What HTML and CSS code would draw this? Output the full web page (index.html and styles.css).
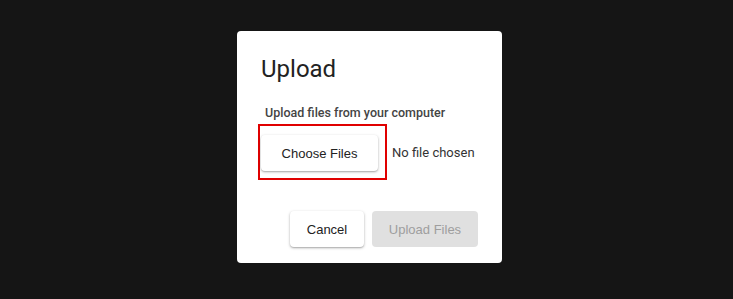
FILE: index.html
```html
<!DOCTYPE html>
<html>
<head>
<meta charset="utf-8">
<link rel="stylesheet" href="styles.css">
</head>
<body>
<div class="dialog">
  <h2 class="title">Upload</h2>
  <p class="subtitle">Upload files from your computer</p>
  <div class="file-row">
    <div class="highlight">
      <button class="btn btn-choose">Choose Files</button>
    </div>
    <span class="file-status">No file chosen</span>
  </div>
  <div class="actions">
    <button class="btn btn-cancel">Cancel</button>
    <button class="btn btn-disabled" disabled>Upload Files</button>
  </div>
</div>
</body>
</html>
```

FILE: styles.css
```css
html, body {
  margin: 0;
  padding: 0;
  height: 299px;
  background: #151515;
  overflow: hidden;
}
body {
  padding-top: 31px;
  box-sizing: border-box;
}
.dialog {
  margin-left: 237px;
  width: 265px;
  height: 232px;
  box-sizing: border-box;
  background: #ffffff;
  border-radius: 4px;
  padding: 22px 24px 16px 24px;
  display: flex;
  flex-direction: column;
  font-family: Roboto, "Liberation Sans", sans-serif;
}
.title {
  margin: 0;
  font-size: 24px;
  line-height: 32px;
  font-weight: 400;
  color: #222222;
}
.subtitle {
  margin: 20px 0 0 4px;
  font-size: 12.5px;
  line-height: 16px;
  font-weight: 500;
  color: #444444;
}
.file-row {
  margin: 3px 0 0 -3px;
  display: flex;
  align-items: center;
}
.highlight {
  border: 2px solid #e00000;
  padding: 9px 7px 7px 1px;
  display: flex;
}
.file-status {
  margin-left: 5px;
  font-size: 13px;
  color: #333333;
}
.btn {
  font-family: "Liberation Sans", Arial, sans-serif;
  font-size: 13px;
  height: 36px;
  border: none;
  border-radius: 4px;
  background: #ffffff;
  color: #222222;
  box-shadow: 0 1px 3px rgba(0,0,0,0.28), 0 1px 1px rgba(0,0,0,0.12);
  cursor: pointer;
}
.btn-choose {
  width: 117px;
  padding: 0;
}
.actions {
  margin-top: auto;
  display: flex;
  justify-content: flex-end;
  gap: 8px;
}
.btn-cancel {
  width: 74px;
  padding: 0;
}
.btn-disabled {
  width: 106px;
  padding: 0;
  background: #e0e0e0;
  color: #9e9e9e;
  box-shadow: none;
  cursor: default;
}
```
